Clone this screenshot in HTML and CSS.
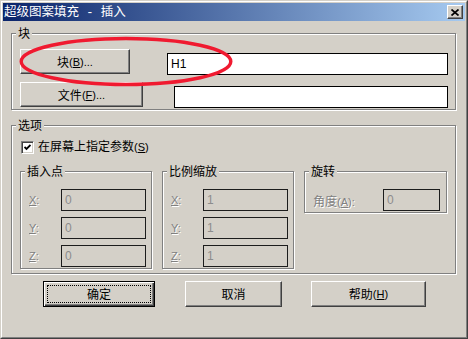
FILE: index.html
```html
<!DOCTYPE html>
<html>
<head>
    <meta charset="utf-8">
    <link rel="stylesheet" href="styles.css">
</head>
<body>
    <div class="window">
        <div class="windowInner">

            <!-- title bar -->
            <div class="titleBar">
                <span class="titleText">超级图案填充<span class="sep"> - </span>插入</span>
                <span class="closeBtn">
                    <svg width="8" height="7" viewBox="0 0 8 7"><path d="M0.5 0.5 L7.5 6.5 M7.5 0.5 L0.5 6.5" stroke="#000" stroke-width="1.7" fill="none"/></svg>
                </span>
            </div>

            <!-- block group -->
            <div class="group groupBlock">
                <span class="legend">块</span>
                <div class="row rowFirst">
                    <div class="btn btnBlock">块<span class="acc">(<u>B</u>)...</span></div>
                    <div class="field fieldName">H1</div>
                </div>
                <div class="row rowSecond">
                    <div class="btn btnFile">文件<span class="acc">(<u>F</u>)...</span></div>
                    <div class="field fieldFile"></div>
                </div>
            </div>

            <!-- options group -->
            <div class="group groupOptions">
                <span class="legend">选项</span>
                <div class="checkRow">
                    <span class="checkbox">
                        <svg width="7" height="7" viewBox="0 0 7 7"><path d="M0.5 3 L2.5 5 L6.5 1" stroke="#000" stroke-width="1.8" fill="none"/></svg>
                    </span>
                    <span class="checkText">在屏幕上指定参数<span class="acc">(<u>S</u>)</span></span>
                </div>

                <div class="subRow">
                    <div class="sub subPoint">
                        <span class="legend">插入点</span>
                        <div class="coord"><span class="coordLabel disabledText"><u>X</u>:</span><span class="field disabledField">0</span></div>
                        <div class="coord"><span class="coordLabel disabledText"><u>Y</u>:</span><span class="field disabledField">0</span></div>
                        <div class="coord"><span class="coordLabel disabledText"><u>Z</u>:</span><span class="field disabledField">0</span></div>
                    </div>
                    <div class="sub subScale">
                        <span class="legend">比例缩放</span>
                        <div class="coord"><span class="coordLabel disabledText"><u>X</u>:</span><span class="field disabledField">1</span></div>
                        <div class="coord"><span class="coordLabel disabledText"><u>Y</u>:</span><span class="field disabledField">1</span></div>
                        <div class="coord"><span class="coordLabel disabledText"><u>Z</u>:</span><span class="field disabledField">1</span></div>
                    </div>
                    <div class="sub subRotate">
                        <span class="legend">旋转</span>
                        <div class="coord"><span class="angleLabel disabledText">角度<span class="acc">(<u>A</u>):</span></span><span class="field disabledField angleField">0</span></div>
                    </div>
                </div>
            </div>

            <!-- dialog buttons -->
            <div class="buttonRow">
                <div class="btn btnOk">确定</div>
                <div class="btn btnCancel">取消</div>
                <div class="btn btnHelp">帮助<span class="acc">(<u>H</u>)</span></div>
            </div>
        </div>
    </div>

    <!-- red marker drawn over the dialog -->
    <svg class="marker" width="468" height="339" viewBox="0 0 468 339">
        <ellipse cx="126" cy="61.5" rx="104.8" ry="23" fill="none" stroke="#f01a30" stroke-width="3.4"/>
    </svg>
</body>
</html>
```

FILE: styles.css
```css
body {
    margin: 0;
    width: 468px;
    height: 339px;
    overflow: hidden;
    position: relative;
    background-color: #d4d0c8;
    font-family: "Noto Sans CJK SC", sans-serif;
    font-size: 12px;
    color: #000;
}

.window {
    box-sizing: border-box;
    width: 468px;
    height: 339px;
    border: 1px solid;
    border-color: #d4d0c8 #404040 #404040 #d4d0c8;
}

.windowInner {
    box-sizing: border-box;
    height: 100%;
    border: 1px solid;
    border-color: #fff #808080 #808080 #fff;
    padding: 1px;
}

.titleBar {
    height: 18px;
    display: flex;
    align-items: center;
    justify-content: space-between;
    padding: 0 2px 0 1px;
    background: linear-gradient(to right, #0a246a, #a6caf0);
    color: #fff;
}

.titleText {
    font-size: 12.5px;
    line-height: 14px;
    white-space: pre;
}

.sep {
    font-family: "Liberation Mono", monospace;
    font-size: 12px;
}

.closeBtn {
    box-sizing: border-box;
    width: 16px;
    height: 14px;
    display: flex;
    align-items: center;
    justify-content: center;
    background-color: #d4d0c8;
    border: 1px solid;
    border-color: #fff #404040 #404040 #fff;
    box-shadow: inset -1px -1px 0 #808080;
}

/* etched frames */
.group, .sub {
    position: relative;
    box-sizing: border-box;
    border: 1px solid #808080;
    box-shadow: 1px 1px 0 #fff, inset 1px 1px 0 #fff;
}

.legend {
    position: absolute;
    top: -8px;
    left: 4px;
    padding: 0 2px;
    line-height: 13px;
    background-color: #d4d0c8;
    white-space: nowrap;
}

.group {
    margin-left: 8px;
    width: 445px;
    padding-left: 8px;
    padding-top: 15px;
}

.groupBlock {
    margin-top: 12px;
    height: 77px;
}

.groupOptions {
    margin-top: 15px;
    height: 149px;
}

.row {
    display: flex;
    align-items: flex-start;
}

.rowSecond {
    margin-top: 7px;
}

.acc {
    font-family: "Liberation Sans", sans-serif;
    font-size: 11px;
}

/* raised buttons */
.btn {
    box-sizing: border-box;
    height: 25px;
    display: flex;
    align-items: center;
    justify-content: center;
    background-color: #d4d0c8;
    border: 1px solid;
    border-color: #fff #404040 #404040 #fff;
    box-shadow: inset -1px -1px 0 #808080;
    line-height: 14px;
    white-space: nowrap;
}

.btnBlock {
    width: 110px;
}

.btnFile {
    width: 123px;
}

/* text boxes */
.field {
    box-sizing: border-box;
    height: 22px;
    border: 1px solid #000;
    background-color: #fff;
    padding-left: 3px;
    font-family: "Liberation Sans", sans-serif;
    font-size: 12px;
    line-height: 20px;
}

.fieldName {
    width: 281px;
    margin-left: 37px;
    margin-top: 4px;
}

.fieldFile {
    width: 274px;
    margin-left: 31px;
    margin-top: 4px;
}

.checkRow {
    display: flex;
    align-items: center;
    height: 13px;
    margin-left: 1px;
}

.checkbox {
    box-sizing: border-box;
    width: 13px;
    height: 13px;
    display: flex;
    align-items: center;
    justify-content: center;
    background-color: #fff;
    border: 1px solid;
    border-color: #808080 #fff #fff #808080;
    box-shadow: inset 1px 1px 0 #404040, inset -1px -1px 0 #d4d0c8;
}

.checkText {
    margin-left: 4px;
    margin-top: -2px;
    line-height: 14px;
    white-space: nowrap;
}

.subRow {
    display: flex;
    align-items: flex-start;
    gap: 10px;
    margin-top: 17px;
}

.sub {
    width: 132px;
    height: 98px;
    padding-top: 17px;
    padding-left: 8px;
}

.subRotate {
    width: 143px;
    height: 42px;
}

.coord {
    display: flex;
    align-items: center;
    height: 22px;
    margin-bottom: 6px;
}

.disabledText {
    color: #808080;
    text-shadow: 1px 1px 0 #fff;
}

.coordLabel {
    width: 32px;
    font-family: "Liberation Sans", sans-serif;
    font-size: 11px;
}

.angleLabel {
    width: 70px;
    white-space: nowrap;
}

.disabledField {
    width: 85px;
    background-color: #d4d0c8;
    border-color: #1c1c1c;
    color: #8c8c8c;
}

.angleField {
    width: 57px;
}

.buttonRow {
    display: flex;
    margin-top: 7px;
    padding-left: 40px;
}

.buttonRow .btn {
    height: 26px;
}

.btnOk {
    position: relative;
    width: 112px;
    border: 1px solid #000;
    box-shadow: inset 1px 1px 0 #fff, inset -1px -1px 0 #404040, inset -2px -2px 0 #808080;
}

.btnOk::after {
    content: "";
    position: absolute;
    top: 3px;
    left: 3px;
    right: 3px;
    bottom: 3px;
    border: 1px dotted #000;
}

.btnCancel {
    width: 97px;
    margin-left: 30px;
}

.btnHelp {
    width: 115px;
    margin-left: 29px;
}

.marker {
    position: absolute;
    left: 0;
    top: 0;
    pointer-events: none;
}
```
